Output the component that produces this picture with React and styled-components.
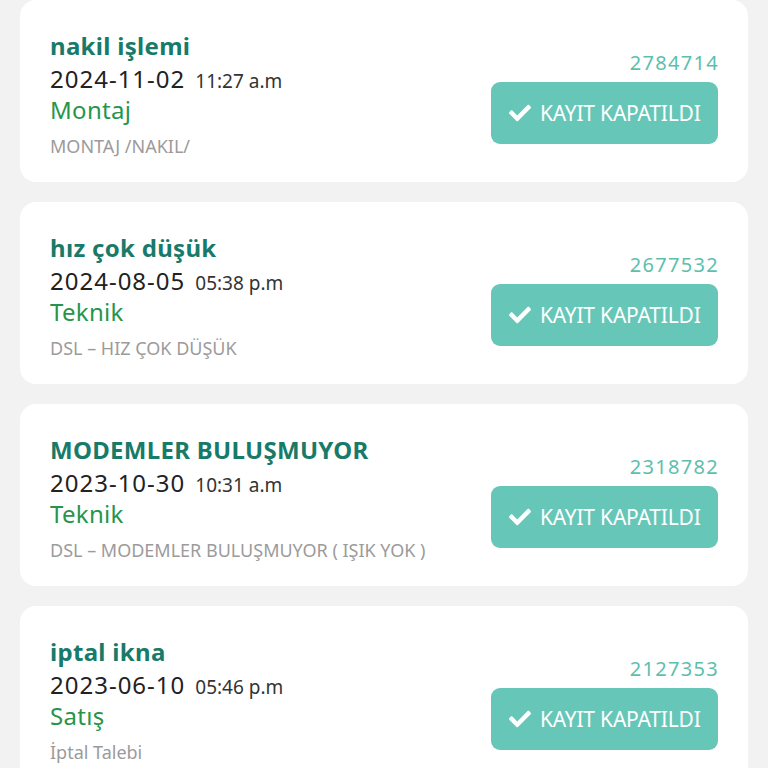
import React from "react";
import styled, { createGlobalStyle } from "styled-components";
import { FaCheck } from "react-icons/fa";

const records = [
  {
    id: "2784714",
    title: "nakil işlemi",
    date: "2024-11-02",
    time: "11:27 a.m",
    category: "Montaj",
    detail: "MONTAJ /NAKIL/",
  },
  {
    id: "2677532",
    title: "hız çok düşük",
    date: "2024-08-05",
    time: "05:38 p.m",
    category: "Teknik",
    detail: "DSL – HIZ ÇOK DÜŞÜK",
  },
  {
    id: "2318782",
    title: "MODEMLER BULUŞMUYOR",
    date: "2023-10-30",
    time: "10:31 a.m",
    category: "Teknik",
    detail: "DSL – MODEMLER BULUŞMUYOR ( IŞIK YOK )",
  },
  {
    id: "2127353",
    title: "iptal ikna",
    date: "2023-06-10",
    time: "05:46 p.m",
    category: "Satış",
    detail: "İptal Talebi",
  },
];

const GlobalStyle = createGlobalStyle`
  html, body {
    margin: 0;
    padding: 0;
    background: #f2f2f2;
    font-family: "Noto Sans", "Open Sans", sans-serif;
    overflow: hidden;
  }
`;

const List = styled.div`
  display: flex;
  flex-direction: column;
  gap: 20px;
  padding: 0 20px;
`;

const Card = styled.div`
  background: #ffffff;
  border-radius: 16px;
  height: 182px;
  box-sizing: border-box;
  padding: 0 30px;
  display: flex;
  align-items: center;
  justify-content: space-between;
`;

const Info = styled.div`
  display: flex;
  flex-direction: column;
  padding-top: 5px;
`;

const Title = styled.div`
  font-size: 24px;
  font-weight: 700;
  color: #187a68;
  line-height: 32px;
  letter-spacing: 0.3px;
`;

const DateRow = styled.div`
  display: flex;
  align-items: baseline;
  gap: 10px;
  line-height: 33px;
`;

const DateText = styled.span`
  font-size: 24px;
  letter-spacing: 1px;
  color: #222222;
`;

const TimeText = styled.span`
  font-size: 19px;
  color: #333333;
`;

const Category = styled.div`
  font-size: 24px;
  letter-spacing: 0.3px;
  color: #26954c;
  line-height: 30px;
  margin-top: -3px;
`;

const Detail = styled.div`
  font-size: 18px;
  color: #9b9b9b;
  line-height: 24px;
  margin-top: 9px;
`;

const Side = styled.div`
  display: flex;
  flex-direction: column;
  align-items: flex-end;
  gap: 6px;
  padding-top: 12px;
`;

const RecordNo = styled.div`
  font-size: 20px;
  letter-spacing: 1.3px;
  color: #5cbfae;
  line-height: 26px;
  margin-right: -1px;
`;

const StatusButton = styled.button`
  display: flex;
  align-items: center;
  gap: 9px;
  height: 62px;
  width: 227px;
  box-sizing: border-box;
  padding: 0 16px 0 18px;
  border: none;
  border-radius: 9px;
  background: #66c7b8;
  color: #ffffff;
  font-family: "Noto Sans", "Open Sans", sans-serif;
  font-size: 21px;
  letter-spacing: -0.2px;
  white-space: nowrap;
  cursor: pointer;

  svg {
    width: 22px;
    height: 22px;
    flex-shrink: 0;
  }
`;

export default function App() {
  return (
    <>
      <GlobalStyle />
      <List>
        {records.map((r) => (
          <Card key={r.id}>
            <Info>
              <Title>{r.title}</Title>
              <DateRow>
                <DateText>{r.date}</DateText>
                <TimeText>{r.time}</TimeText>
              </DateRow>
              <Category>{r.category}</Category>
              <Detail>{r.detail}</Detail>
            </Info>
            <Side>
              <RecordNo>{r.id}</RecordNo>
              <StatusButton>
                <FaCheck />
                KAYIT KAPATILDI
              </StatusButton>
            </Side>
          </Card>
        ))}
      </List>
    </>
  );
}
